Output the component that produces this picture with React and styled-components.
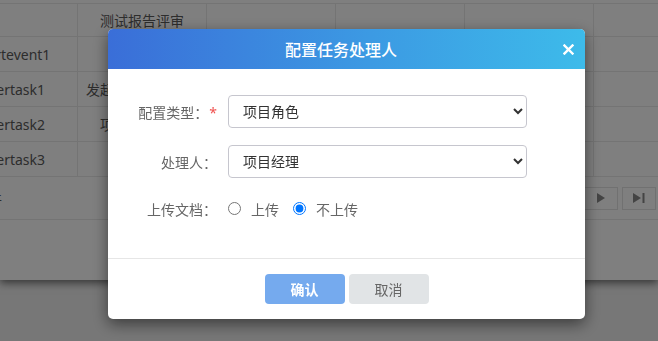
import React from "react";
import styled, { createGlobalStyle } from "styled-components";

const Global = createGlobalStyle`
  html, body { margin: 0; padding: 0; height: 100%; overflow: hidden; background: #eeeeee; }
  body { font-family: "Noto Sans", "Noto Sans CJK SC", sans-serif; }
  #root { height: 100%; }
`;

const Page = styled.div`
  height: 100%;
  background: #eeeeee;
`;

const Panel = styled.div`
  height: 280px;
  padding-top: 3px;
  box-sizing: border-box;
  background: #fff;
  overflow: hidden;
  box-shadow: 0 3px 8px rgba(0, 0, 0, 0.55);
`;

const Table = styled.div`
  display: grid;
  grid-template-columns: repeat(6, 129px);
  margin-left: -51px;
  border-top: 1px solid #e8e8e8;
`;

const Cell = styled.div`
  height: ${(p) => (p.$first ? 32 : 34)}px;
  border-right: 1px solid #e8e8e8;
  border-bottom: 1px solid #e8e8e8;
  display: flex;
  align-items: center;
  justify-content: center;
  font-size: 14px;
  color: #5a5a5a;
  white-space: nowrap;
`;

const Footer = styled.div`
  height: 42px;
  border-bottom: 1px solid #e8e8e8;
  display: flex;
  align-items: center;
  padding-right: 2px;
  font-size: 14px;
  color: #5a5a5a;
`;

const Count = styled.span`
  margin-left: -34px;
  flex: 1;
`;

const Pager = styled.div`
  display: flex;
  gap: 4px;
`;

const PageBtn = styled.div`
  width: 34px;
  height: 23px;
  box-sizing: border-box;
  border: 1px solid #e2e2e2;
  display: flex;
  align-items: center;
  justify-content: center;
`;

const Overlay = styled.div`
  position: fixed;
  inset: 0;
  background: rgba(0, 0, 0, 0.5);
  padding: 29px 0 0 108px;
  box-sizing: border-box;
`;

const Dialog = styled.div`
  width: 477px;
  background: #fff;
  border-radius: 5px;
  overflow: hidden;
  box-shadow: 0 5px 15px rgba(0, 0, 0, 0.5);
`;

const Header = styled.div`
  height: 40px;
  display: flex;
  align-items: center;
  padding-right: 11px;
  background: linear-gradient(90deg, #3a6ed8 0%, #3c9ae3 55%, #3dbbea 100%);
`;

const Title = styled.div`
  flex: 1;
  text-align: center;
  color: #fff;
  font-size: 16px;
  font-weight: 500;
`;

const Close = styled.div`
  width: 12px;
  height: 12px;
  margin-left: -12px;
  display: flex;
  align-items: center;
  justify-content: center;
`;

const Body = styled.div`
  padding: 26px 0 33px;
  display: flex;
  flex-direction: column;
`;

const Row = styled.div`
  display: flex;
  align-items: center;
  height: 33px;
  margin-top: ${(p) => p.$mt || 0}px;
`;

const Label = styled.div`
  width: 109px;
  margin-right: 11px;
  text-align: right;
  font-size: 14px;
  color: #666;
  white-space: nowrap;
`;

const Star = styled.span`
  color: #f0514f;
  margin-left: 1px;
`;

const Select = styled.select`
  width: 299px;
  height: 33px;
  box-sizing: border-box;
  border: 1px solid #c6c6ce;
  border-radius: 4px;
  padding: 0 8px 0 10px;
  font-family: inherit;
  font-size: 14px;
  color: #333;
  background: #fff;
  outline: none;
`;

const Radios = styled.div`
  display: flex;
  align-items: center;
  gap: 14px;
`;

const Option = styled.label`
  display: flex;
  align-items: center;
  gap: 10px;
  font-size: 14px;
  color: #666;
`;

const Radio = styled.input`
  margin: 0;
  width: 13px;
  height: 13px;
`;

const Actions = styled.div`
  border-top: 1px solid #e6e6e6;
  padding: 15px 0;
  display: flex;
  justify-content: center;
  gap: 4px;
`;

const Button = styled.button`
  width: 80px;
  height: 30px;
  border: none;
  border-radius: 4px;
  font-family: inherit;
  font-size: 14px;
  font-weight: ${(p) => (p.$primary ? 700 : 400)};
  color: ${(p) => (p.$primary ? "#fff" : "#666")};
  background: ${(p) => (p.$primary ? "#75aaee" : "#e1e4e6")};
`;

const rows = [
  ["", "测试报告评审", "", "", "", ""],
  ["startevent1", "", "", "", "", ""],
  ["usertask1", "发起测试报告评审", "", "", "", ""],
  ["usertask2", "项目经理审核", "", "", "", ""],
  ["usertask3", "", "", "", "", ""],
];

export default function App() {
  return (
    <>
      <Global />
      <Page>
        <Panel>
          <Table>
            {rows.map((r, i) =>
              r.map((c, j) => (
                <Cell key={i + "-" + j} $first={i === 0}>
                  {c}
                </Cell>
              ))
            )}
          </Table>
          <Footer>
            <Count>共4件</Count>
            <Pager>
              <PageBtn>
                <svg width="10" height="12" viewBox="0 0 10 12">
                  <path d="M1 1 L9 6 L1 11 Z" fill="#888" />
                </svg>
              </PageBtn>
              <PageBtn>
                <svg width="14" height="12" viewBox="0 0 14 12">
                  <path d="M1 1 L9 6 L1 11 Z" fill="#888" />
                  <rect x="10.5" y="1" width="2" height="10" fill="#888" />
                </svg>
              </PageBtn>
            </Pager>
          </Footer>
        </Panel>
      </Page>
      <Overlay>
        <Dialog>
          <Header>
            <Title>配置任务处理人</Title>
            <Close>
              <svg width="11" height="11" viewBox="0 0 11 11">
                <path d="M1.5 1.5 L9.5 9.5 M9.5 1.5 L1.5 9.5" stroke="#fff" strokeWidth="2.4" strokeLinecap="square" />
              </svg>
            </Close>
          </Header>
          <Body>
            <Row>
              <Label>
                配置类型：<Star>*</Star>
              </Label>
              <Select defaultValue="role">
                <option value="role">项目角色</option>
                <option value="user">指定用户</option>
              </Select>
            </Row>
            <Row $mt={17}>
              <Label>处理人：</Label>
              <Select defaultValue="pm">
                <option value="pm">项目经理</option>
                <option value="tm">测试经理</option>
              </Select>
            </Row>
            <Row $mt={14}>
              <Label>上传文档：</Label>
              <Radios>
                <Option>
                  <Radio type="radio" name="upload" />
                  上传
                </Option>
                <Option>
                  <Radio type="radio" name="upload" defaultChecked />
                  不上传
                </Option>
              </Radios>
            </Row>
          </Body>
          <Actions>
            <Button $primary>确认</Button>
            <Button>取消</Button>
          </Actions>
        </Dialog>
      </Overlay>
    </>
  );
}
